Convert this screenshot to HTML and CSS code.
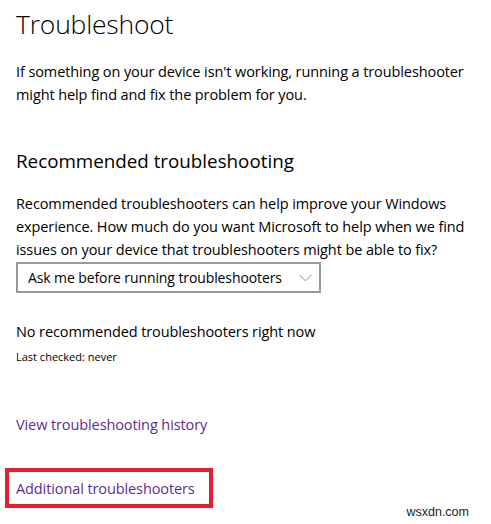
FILE: index.html
```html
<!DOCTYPE html>
<html lang="en">
<head>
<meta charset="utf-8">
<title>Troubleshoot</title>
<link rel="stylesheet" href="styles.css">
</head>
<body>
<main class="page">
  <h1 class="title">Troubleshoot</h1>
  <p class="text intro">If something on your device isn't working, running a troubleshooter<br>might help find and fix the problem for you.</p>

  <h2 class="subtitle">Recommended troubleshooting</h2>
  <p class="text desc">Recommended troubleshooters can help improve your Windows<br>experience. How much do you want Microsoft to help when we find<br>issues on your device that troubleshooters might be able to fix?</p>

  <div class="select">
    <span class="select-label">Ask me before running troubleshooters</span>
    <svg class="chevron" width="13" height="8" viewBox="0 0 13 8" aria-hidden="true"><path d="M0.5 0.8 L6.5 6.8 L12.5 0.8" fill="none" stroke="#8a8a8a" stroke-width="1"/></svg>
  </div>

  <p class="text status">No recommended troubleshooters right now</p>
  <p class="small">Last checked: never</p>

  <a class="link history" href="#">View troubleshooting history</a>

  <div class="highlight">
    <a class="link" href="#">Additional troubleshooters</a>
  </div>

  <span class="watermark">wsxdn.com</span>
</main>
</body>
</html>
```

FILE: styles.css
```css
html, body {
  margin: 0;
  padding: 0;
  background: #ffffff;
}

.page {
  position: relative;
  width: 491px;
  height: 524px;
  box-sizing: border-box;
  padding: 0 0 0 16px;
  display: flex;
  flex-direction: column;
  align-items: flex-start;
  font-family: "Segoe UI", "Open Sans", "Noto Sans", sans-serif;
  color: #000000;
  overflow: hidden;
}

.page > * {
  flex-shrink: 0;
}

.title {
  margin: 5px 0 0 0;
  font-size: 26.5px;
  font-weight: 300;
  line-height: 38px;
  letter-spacing: -0.2px;
}

.text {
  margin: 0;
  font-size: 14.5px;
  line-height: 23px;
  letter-spacing: -0.1px;
}

.intro {
  margin-top: 17px;
}

.subtitle {
  margin: 41px 0 0 0;
  font-size: 18.8px;
  font-weight: 400;
  line-height: 28px;
}

.desc {
  margin-top: 17px;
}

.select {
  margin-top: 1px;
  width: 305px;
  height: 31px;
  box-sizing: border-box;
  border: 2px solid #999999;
  display: flex;
  align-items: center;
  justify-content: space-between;
  padding: 0 7px 0 10px;
}

.select-label {
  font-size: 14px;
  letter-spacing: -0.1px;
}

.chevron {
  flex-shrink: 0;
}

.status {
  margin-top: 27px;
}

.small {
  margin: 6px 0 0 0;
  font-size: 11px;
  line-height: 16px;
}

.link {
  font-size: 14.5px;
  line-height: 23px;
  color: #5c2d91;
  text-decoration: none;
  letter-spacing: -0.1px;
}

.history {
  margin-top: 48px;
}

.highlight {
  margin: 32px 0 0 -11px;
  width: 208px;
  height: 40px;
  box-sizing: border-box;
  border: 4px solid #e5202e;
  display: flex;
  align-items: center;
  padding-left: 7px;
}

.watermark {
  position: absolute;
  right: 22px;
  bottom: 5px;
  font-family: "Liberation Sans", Arial, sans-serif;
  font-size: 12.5px;
  color: #222222;
}
```
